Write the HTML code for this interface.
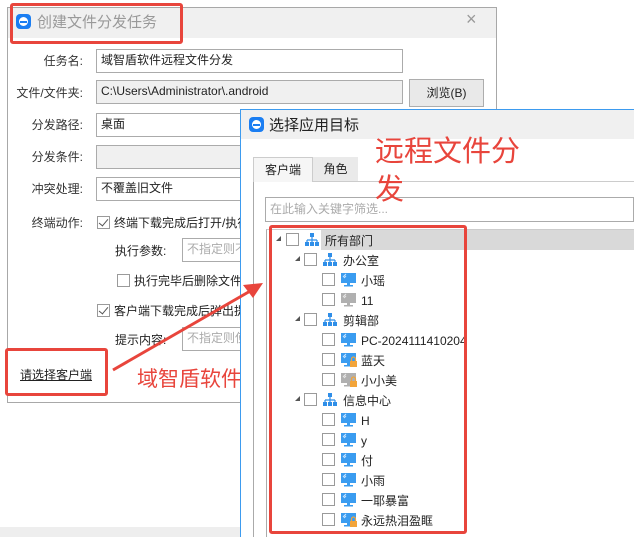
<!DOCTYPE html><html><head><meta charset="utf-8"><style>
*{margin:0;padding:0;box-sizing:border-box}
body{width:634px;height:537px;position:relative;overflow:hidden;background:#fff;font-family:"Liberation Sans","Noto Sans CJK SC",sans-serif;font-size:12px;color:#222}
.a{position:absolute}
.inp{position:absolute;border:1px solid #ababab;background:#fff;padding-left:4px;line-height:21px;font-size:12px;white-space:nowrap;overflow:hidden}
.lbl{position:absolute;width:76px;text-align:right;left:7px;font-size:12px;color:#333}
.cb{position:absolute;width:13px;height:13px;border:1px solid #9a9a9a;background:#fff}
.ck::after{content:"";position:absolute;left:3px;top:0px;width:4px;height:8px;border:solid #555;border-width:0 1.5px 1.5px 0;transform:rotate(40deg)}
.red{position:absolute;border:3px solid #e8453c;border-radius:3px}
.logo{position:absolute;width:15px;height:15px;border-radius:4px;background:#1b7ef2}
.logo::after{content:"";position:absolute;left:3px;top:3px;width:9px;height:9px;border-radius:50%;background:#fff}
.logo::before{content:"";position:absolute;left:4px;top:7px;width:7px;height:2px;background:#1b7ef2;z-index:2}
</style></head><body>
<div class="a" style="left:7px;top:7px;width:490px;height:396px;border:1px solid #a8a8a8;background:#fff"></div>
<div class="a" style="left:8px;top:8px;width:488px;height:30px;background:#f0f0f0"></div>
<div class="logo" style="left:16px;top:14px"></div>
<div class="a" style="left:37px;top:11px;font-size:15px;color:#999">创建文件分发任务</div>
<div class="a" style="left:466px;top:9px;font-size:18px;color:#999">×</div>
<div class="red" style="left:10px;top:3px;width:173px;height:41px"></div>

<div class="lbl" style="top:52px">任务名:</div>
<div class="inp" style="left:96px;top:49px;width:307px;height:24px">域智盾软件远程文件分发</div>
<div class="lbl" style="top:84px">文件/文件夹:</div>
<div class="inp" style="left:96px;top:80px;width:307px;height:24px;background:#f0f0f0">C:\Users\Administrator\.android</div>
<div class="a" style="left:409px;top:79px;width:75px;height:28px;border:1px solid #adadad;background:#e9e9e9;text-align:center;line-height:26px">浏览(B)</div>
<div class="lbl" style="top:116px">分发路径:</div>
<div class="inp" style="left:96px;top:113px;width:160px;height:24px">桌面</div>
<div class="lbl" style="top:148px">分发条件:</div>
<div class="inp" style="left:96px;top:145px;width:160px;height:24px;background:#f0f0f0"></div>
<div class="lbl" style="top:180px">冲突处理:</div>
<div class="inp" style="left:96px;top:177px;width:160px;height:24px">不覆盖旧文件</div>
<div class="lbl" style="top:214px">终端动作:</div>
<div class="cb ck" style="left:97px;top:216px"></div>
<div class="a" style="left:114px;top:214px">终端下载完成后打开/执行</div>
<div class="a" style="left:115px;top:242px">执行参数:</div>
<div class="inp" style="left:182px;top:238px;width:80px;height:24px;color:#aaa">不指定则不</div>
<div class="cb" style="left:117px;top:274px"></div>
<div class="a" style="left:134px;top:272px">执行完毕后删除文件</div>
<div class="cb ck" style="left:97px;top:304px"></div>
<div class="a" style="left:114px;top:302px">客户端下载完成后弹出提</div>
<div class="a" style="left:115px;top:331px">提示内容:</div>
<div class="inp" style="left:182px;top:327px;width:80px;height:24px;color:#aaa">不指定则使</div>
<div class="a" style="left:20px;top:366px;text-decoration:underline">请选择客户端</div>
<div class="red" style="left:5px;top:348px;width:103px;height:48px"></div>
<div class="a" style="left:137px;top:363px;font-size:21px;color:#e8453c">域智盾软件</div>
<div class="a" style="left:0;top:527px;width:240px;height:10px;background:#eee"></div>

<div class="a" style="left:240px;top:109px;width:394px;height:428px;background:#fff;border-left:1px solid #3d9bef;border-top:1px solid #3d9bef"></div>
<div class="a" style="left:241px;top:110px;width:393px;height:29px;background:#f0f0f0"></div>
<div class="logo" style="left:249px;top:117px"></div>
<div class="a" style="left:269px;top:114px;font-size:15px;color:#222">选择应用目标</div>
<div class="a" style="left:253px;top:181px;width:381px;height:356px;border-left:1px solid #aaa;border-top:1px solid #ccc"></div>
<div class="a" style="left:253px;top:157px;width:60px;height:25px;border:1px solid #ccc;border-bottom:none;background:#f6f6f6;text-align:center;line-height:24px">客户端</div>
<div class="a" style="left:313px;top:157px;width:45px;height:24px;background:#eaeaea;text-align:center;line-height:24px">角色</div>
<div class="inp" style="left:265px;top:197px;width:369px;height:25px;color:#aaa;line-height:23px">在此输入关键字筛选...</div>
<div class="a" style="left:266px;top:229px;width:368px;height:308px;border-left:1px solid #aaa;border-top:1px solid #ccc"></div>
<div class="a" style="left:321px;top:230px;width:313px;height:20px;background:#d9d9d9"></div>
<div class="a" style="left:375px;top:133px;font-size:29px;color:#e8453c;line-height:38px;width:180px">远程文件分<br>发</div>

<svg class="a" style="left:0;top:0" width="634" height="537">
<defs>
<g id="org"><rect x="5" y="0" width="4" height="4" fill="#2f8ee8"/><path d="M7 4v3M2 7h10M2 7v2M7 7v2M12 7v2" stroke="#2f8ee8" stroke-width="1.2" fill="none"/><rect x="0" y="9" width="4" height="4" fill="#2f8ee8"/><rect x="5" y="9" width="4" height="4" fill="#2f8ee8"/><rect x="10" y="9" width="4" height="4" fill="#2f8ee8"/></g>
<g id="pc"><rect x="0" y="0" width="15" height="10" fill="#3a9cf0"/><path d="M2 4l3-3M3 5l2-2" stroke="#cfe8ff" stroke-width="1"/><rect x="6" y="10" width="3" height="2" fill="#3a9cf0"/><rect x="3" y="12" width="9" height="1.5" fill="#3a9cf0"/></g>
<g id="pcg"><rect x="0" y="0" width="15" height="10" fill="#b0b0b0"/><path d="M2 4l3-3M3 5l2-2" stroke="#e8e8e8" stroke-width="1"/><rect x="6" y="10" width="3" height="2" fill="#b0b0b0"/><rect x="3" y="12" width="9" height="1.5" fill="#b0b0b0"/></g>
<g id="lock"><rect x="9" y="8" width="7" height="6" fill="#f2a43a"/><path d="M10.5 8v-2a2 2 0 0 1 4 0v2" stroke="#f2a43a" fill="none" stroke-width="1.2"/></g>
</defs>
<line x1="113" y1="370" x2="252" y2="290" stroke="#e8453c" stroke-width="3"/>
<polygon points="263,283 243,285 253,298" fill="#e8453c"/>
<g font-family="Liberation Sans,Noto Sans CJK SC,sans-serif" font-size="12" fill="#222">
<path d="M281 236v5h-5z" fill="#555"/><rect x="286.5" y="233.5" width="12" height="12" fill="#fff" stroke="#9a9a9a"/><use href="#org" x="305" y="233"/><text x="325" y="245">所有部门</text>
<path d="M300 256v5h-5z" fill="#555"/><rect x="304.5" y="253.5" width="12" height="12" fill="#fff" stroke="#9a9a9a"/><use href="#org" x="323" y="253"/><text x="343" y="265">办公室</text>
<rect x="322.5" y="273.5" width="12" height="12" fill="#fff" stroke="#9a9a9a"/><use href="#pc" x="341" y="273"/><text x="361" y="285">小瑶</text>
<rect x="322.5" y="293.5" width="12" height="12" fill="#fff" stroke="#9a9a9a"/><use href="#pcg" x="341" y="293"/><text x="361" y="305">11</text>
<path d="M300 316v5h-5z" fill="#555"/><rect x="304.5" y="313.5" width="12" height="12" fill="#fff" stroke="#9a9a9a"/><use href="#org" x="323" y="313"/><text x="343" y="325">剪辑部</text>
<rect x="322.5" y="333.5" width="12" height="12" fill="#fff" stroke="#9a9a9a"/><use href="#pc" x="341" y="333"/><text x="361" y="345">PC-20241114102047</text>
<rect x="322.5" y="353.5" width="12" height="12" fill="#fff" stroke="#9a9a9a"/><use href="#pc" x="341" y="353"/><use href="#lock" x="341" y="353"/><text x="361" y="365">蓝天</text>
<rect x="322.5" y="373.5" width="12" height="12" fill="#fff" stroke="#9a9a9a"/><use href="#pcg" x="341" y="373"/><use href="#lock" x="341" y="373"/><text x="361" y="385">小小美</text>
<path d="M300 396v5h-5z" fill="#555"/><rect x="304.5" y="393.5" width="12" height="12" fill="#fff" stroke="#9a9a9a"/><use href="#org" x="323" y="393"/><text x="343" y="405">信息中心</text>
<rect x="322.5" y="413.5" width="12" height="12" fill="#fff" stroke="#9a9a9a"/><use href="#pc" x="341" y="413"/><text x="361" y="425">H</text>
<rect x="322.5" y="433.5" width="12" height="12" fill="#fff" stroke="#9a9a9a"/><use href="#pc" x="341" y="433"/><text x="361" y="445">y</text>
<rect x="322.5" y="453.5" width="12" height="12" fill="#fff" stroke="#9a9a9a"/><use href="#pc" x="341" y="453"/><text x="361" y="465">付</text>
<rect x="322.5" y="473.5" width="12" height="12" fill="#fff" stroke="#9a9a9a"/><use href="#pc" x="341" y="473"/><text x="361" y="485">小雨</text>
<rect x="322.5" y="493.5" width="12" height="12" fill="#fff" stroke="#9a9a9a"/><use href="#pc" x="341" y="493"/><text x="361" y="505">一耶暴富</text>
<rect x="322.5" y="513.5" width="12" height="12" fill="#fff" stroke="#9a9a9a"/><use href="#pc" x="341" y="513"/><use href="#lock" x="341" y="513"/><text x="361" y="525">永远热泪盈眶</text>
</g>
</svg>
<div class="a" style="left:467px;top:251px;width:167px;height:286px;background:#fff"></div>
<div class="red" style="left:269px;top:225px;width:198px;height:309px"></div>
</body></html>
